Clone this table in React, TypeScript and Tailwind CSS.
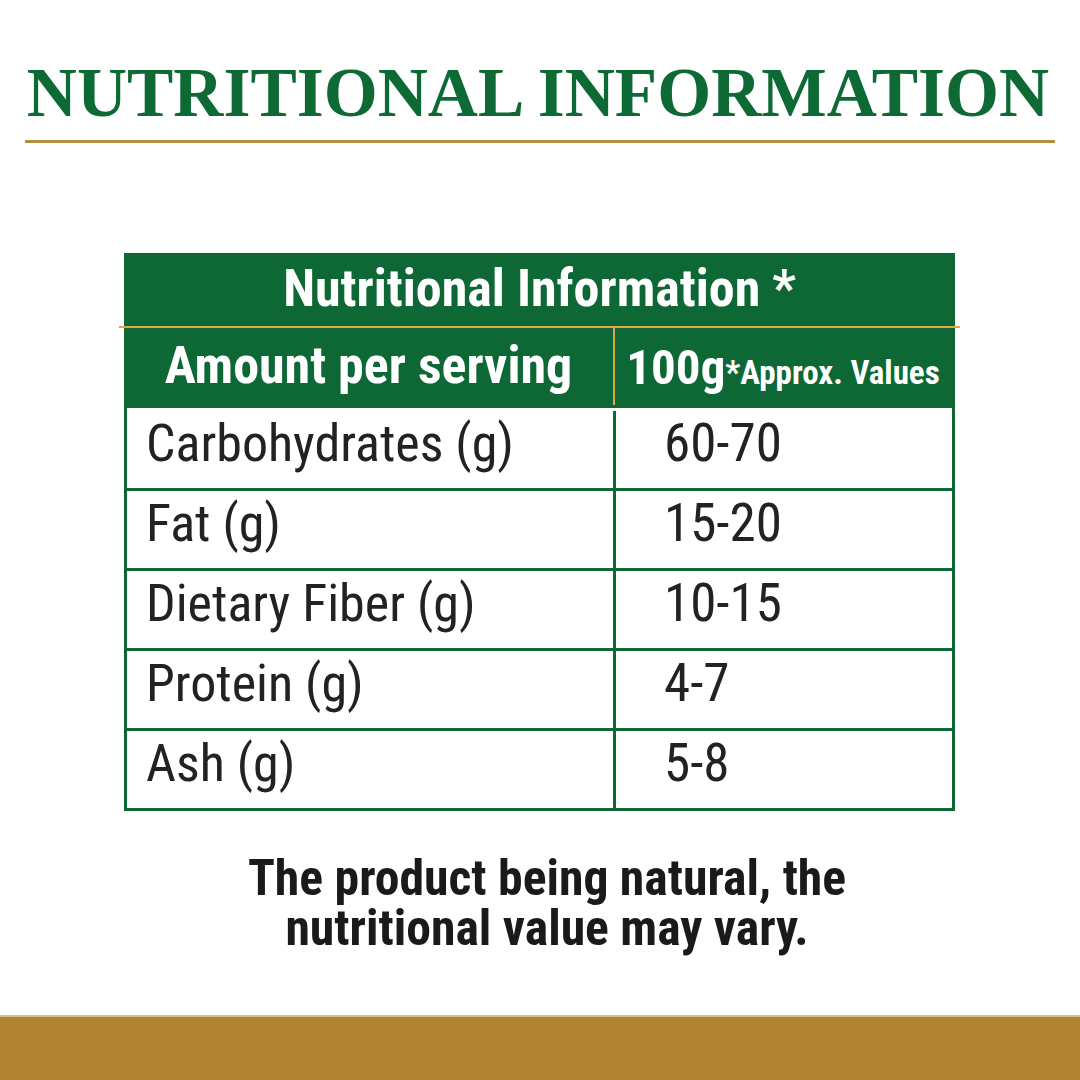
const rows: [string, string][] = [
  ['Carbohydrates (g)', '60-70'],
  ['Fat (g)', '15-20'],
  ['Dietary Fiber (g)', '10-15'],
  ['Protein (g)', '4-7'],
  ['Ash (g)', '5-8'],
];

export default function App() {
  return (
    <div className="w-[1080px] h-[1080px] bg-white flex flex-col font-['Roboto_Condensed',Roboto,sans-serif]">
      <div className="pt-[55px] flex justify-center pr-[4px]">
        <h1 className="font-['Liberation_Serif',serif] font-bold text-[69.4px] leading-[76px] text-[#0e6a35]">
          NUTRITIONAL INFORMATION
        </h1>
      </div>
      <div className="mt-[9px] mx-[25px] h-[3px] bg-[#b58e3e]" />

      <div className="mt-[110px] ml-[124px] w-[831px] flex flex-col">
        <div className="h-[73px] bg-[#0d6836] flex items-center justify-center pb-[2px]">
          <span className="text-white font-bold text-[52px] leading-none">Nutritional Information *</span>
        </div>
        <div className="-mx-[5px] h-[2px] bg-[#e0a64a]" />
        <div className="h-[80px] bg-[#0d6836] flex">
          <div className="w-[489px] flex items-center justify-center pb-[4px]">
            <span className="text-white font-bold text-[52px] leading-none">Amount per serving</span>
          </div>
          <div className="w-[2px] h-[77px] bg-[#e0a64a]" />
          <div className="flex-1 flex items-center justify-center pb-[2px] pr-[4px]">
            <span className="text-white font-bold leading-none">
              <span className="text-[49px]">100g</span>
              <span className="text-[33px]">*Approx. Values</span>
            </span>
          </div>
        </div>
        <div className="border-x-[3px] border-b-[3px] border-[#0d6836]">
          {rows.map(([k, v], i) => (
            <div key={k} className={`flex h-[80px] ${i > 0 ? 'border-t-[3px] border-[#0d6836]' : 'pt-[3px]'}`}>
              <div className="w-[489px] border-r-[3px] border-[#0d6836] flex items-center pl-[19px] pb-[12px]">
                <span className="text-[52px] leading-none text-[#222222]">{k}</span>
              </div>
              <div className="flex-1 flex items-center pl-[48px] pb-[12px]">
                <span className="text-[53px] leading-none text-[#222222]">{v}</span>
              </div>
            </div>
          ))}
        </div>
      </div>

      <div className="mt-[42px] flex justify-center pl-[14px]">
        <p className="text-center font-bold text-[49.7px] leading-[50px] text-[#1a1a1a]">
          The product being natural, the
          <br />
          nutritional value may vary.
        </p>
      </div>

      <div className="flex-1" />
      <div className="h-[2px] bg-[#d8c08a]" />
      <div className="h-[63px] bg-[#b0842f]" />
    </div>
  );
}
